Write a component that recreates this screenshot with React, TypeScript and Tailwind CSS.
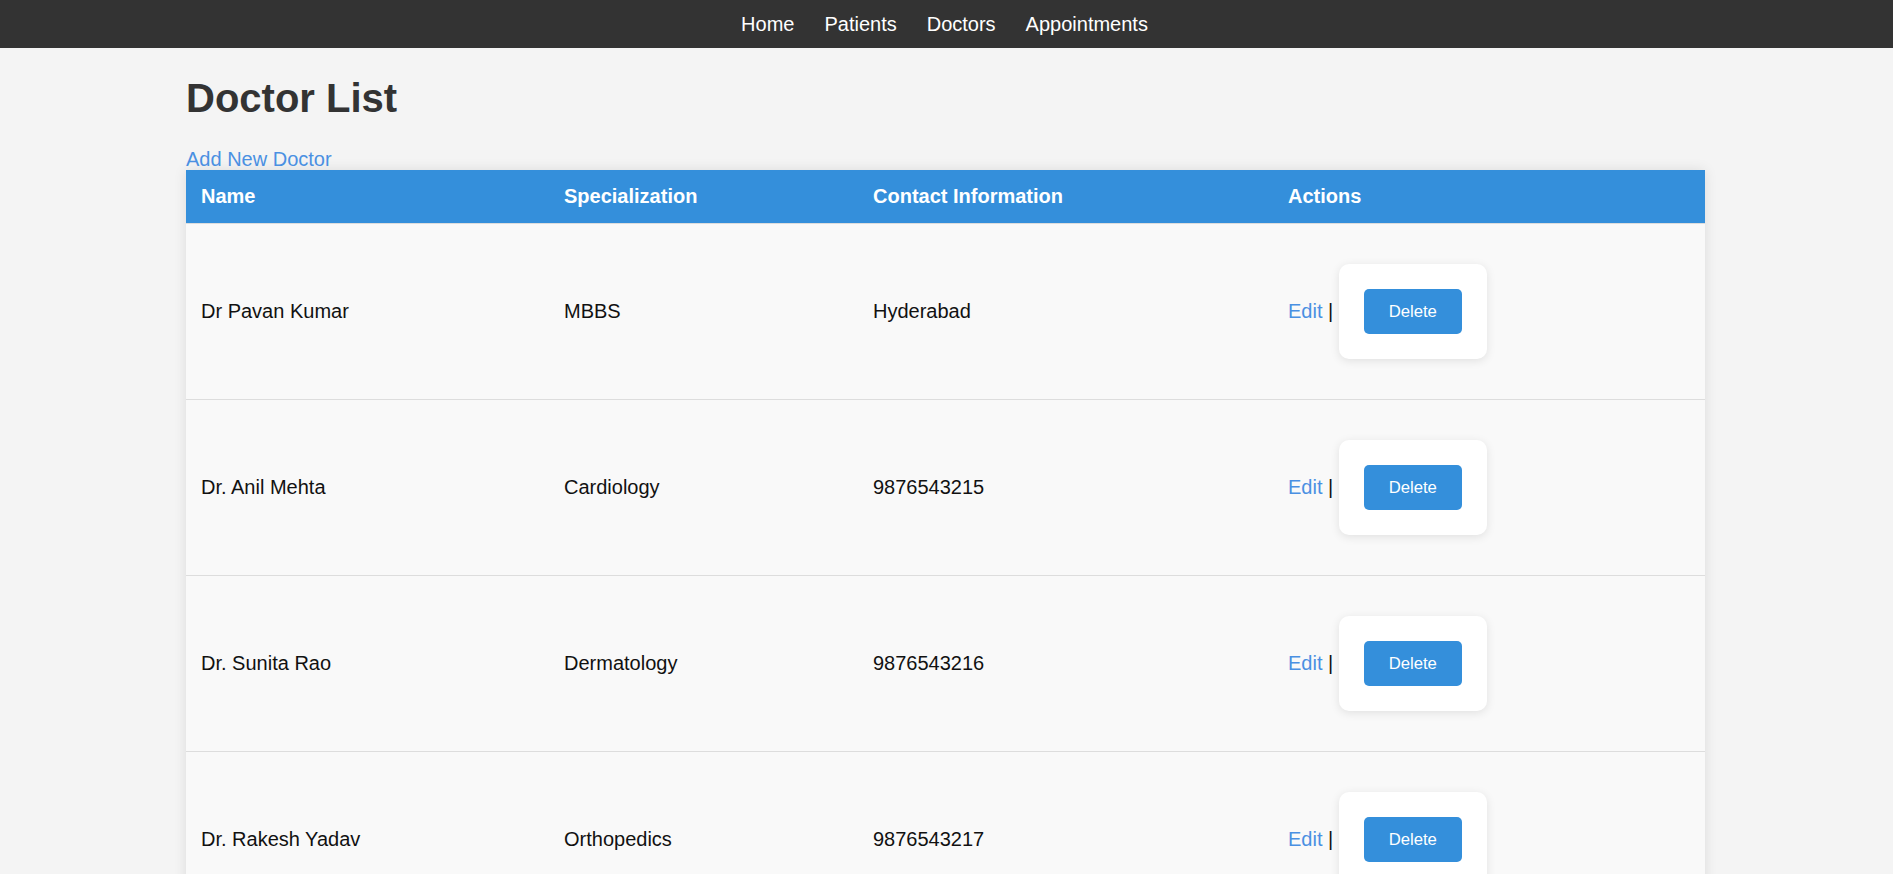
import React from 'react';

const doctors = [
  { id: 1, name: 'Dr Pavan Kumar', specialization: 'MBBS', contact: 'Hyderabad' },
  { id: 2, name: 'Dr. Anil Mehta', specialization: 'Cardiology', contact: '9876543215' },
  { id: 3, name: 'Dr. Sunita Rao', specialization: 'Dermatology', contact: '9876543216' },
  { id: 4, name: 'Dr. Rakesh Yadav', specialization: 'Orthopedics', contact: '9876543217' },
];

const navLinks = ['Home', 'Patients', 'Doctors', 'Appointments'];

const App = () => {
  return (
    <div className="min-h-screen bg-[#f4f4f4] font-['Liberation_Sans',Arial,sans-serif] text-[20px] leading-[23px] text-[#111]">
      <nav className="bg-[#333] h-[48px] flex items-center justify-center pr-[4px]">
        {navLinks.map((link) => (
          <a key={link} href="#" className="text-white mx-[15px] text-[20px] leading-[23px]">
            {link}
          </a>
        ))}
      </nav>

      <div className="w-[1519px] ml-[186px]">
        <h1 className="text-[40px] leading-[46px] font-bold text-[#333] mt-[27px] mb-[27px]">Doctor List</h1>
        <a href="#" className="text-[#4a90e2] block w-fit">Add New Doctor</a>

        <table className="w-full border-collapse shadow-[0_0_12px_rgba(0,0,0,0.1)] -mt-[1px]">
          <thead>
            <tr className="bg-[#348fdb] text-white">
              <th className="w-[363px] text-left font-bold px-[15px] py-[15px] border-b border-[#ddd]">Name</th>
              <th className="w-[309px] text-left font-bold px-[15px] py-[15px] border-b border-[#ddd]">Specialization</th>
              <th className="w-[415px] text-left font-bold px-[15px] py-[15px] border-b border-[#ddd]">Contact Information</th>
              <th className="w-[432px] text-left font-bold px-[15px] py-[15px] border-b border-[#ddd]">Actions</th>
            </tr>
          </thead>
          <tbody>
            {doctors.map((doc) => (
              <tr key={doc.id} className="bg-[#f9f9f9] border-b border-[#ddd]">
                <td className="px-[15px] py-[15px] align-middle">{doc.name}</td>
                <td className="px-[15px] py-[15px] align-middle">{doc.specialization}</td>
                <td className="px-[15px] py-[15px] align-middle">{doc.contact}</td>
                <td className="px-[15px] py-[15px] align-middle">
                  <div className="flex items-center">
                    <a href="#" className="text-[#4a90e2]">Edit</a>
                    <span className="whitespace-pre text-[#111]"> | </span>
                    <div className="bg-white rounded-[10px] shadow-[0_2px_10px_rgba(0,0,0,0.1)] p-[25px] my-[25px]">
                      <button className="bg-[#348fdb] text-white rounded-[5px] h-[45px] w-[98px] text-[16.7px] leading-[19px]">
                        Delete
                      </button>
                    </div>
                  </div>
                </td>
              </tr>
            ))}
          </tbody>
        </table>
      </div>
    </div>
  );
};

export default App;
